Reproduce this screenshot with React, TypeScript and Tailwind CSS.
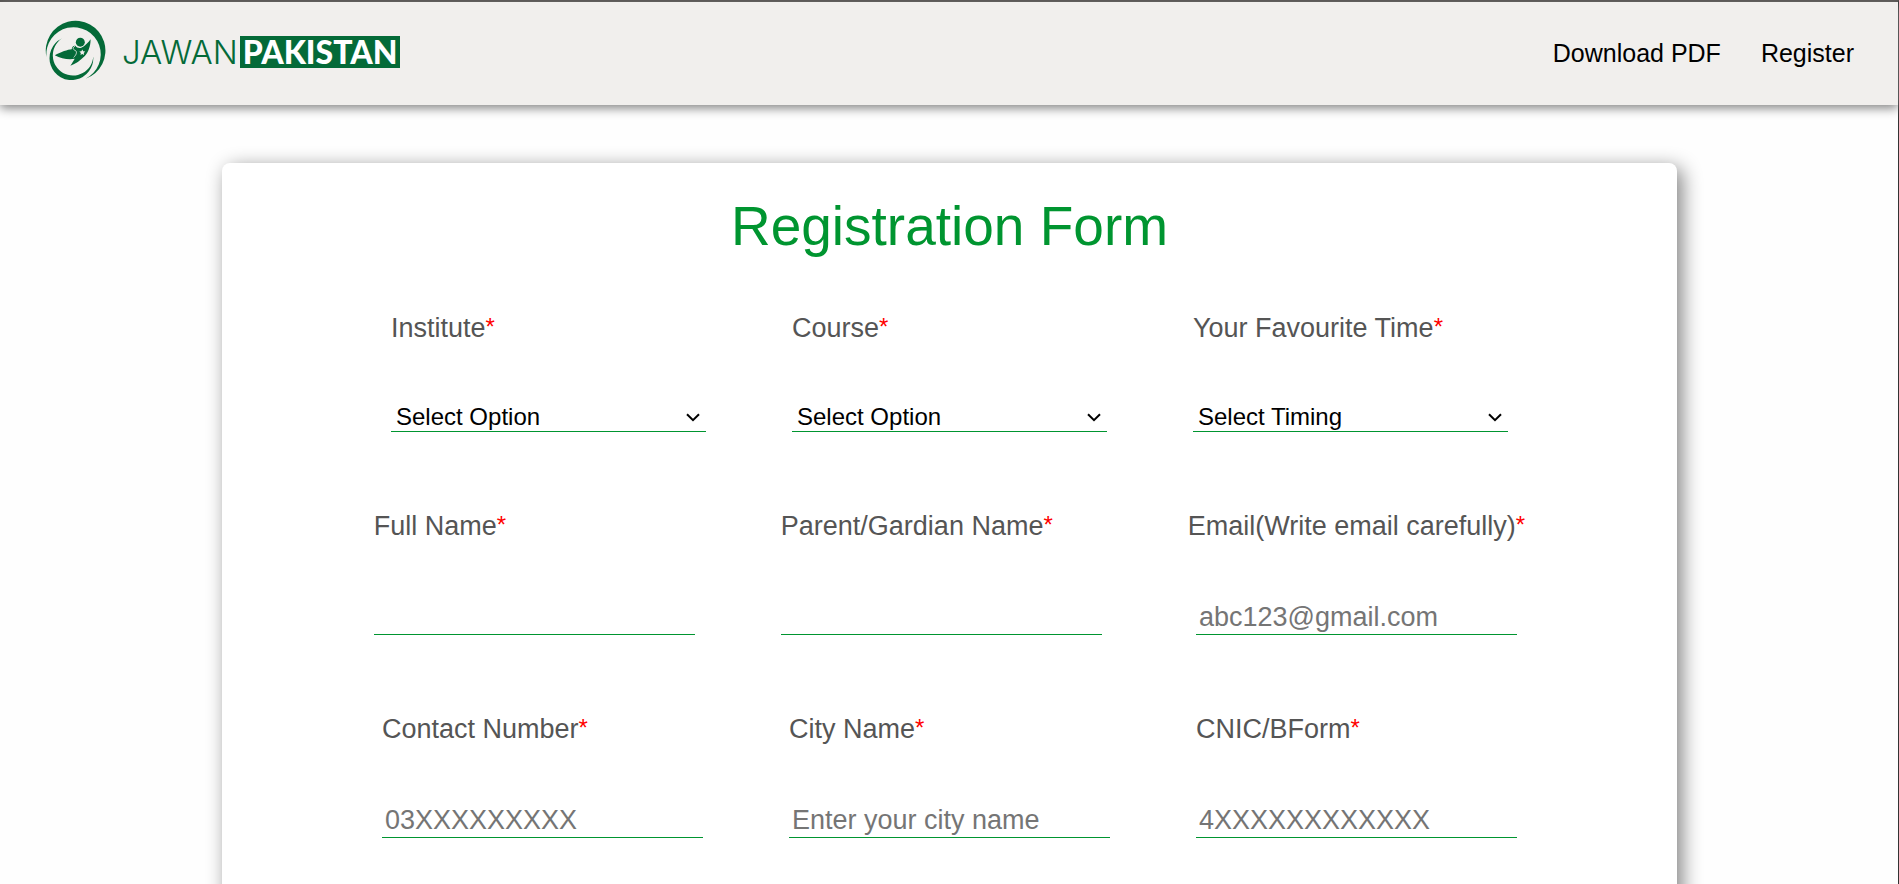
import React from "react";

type FieldBase = { id: string; label: string };
type SelectSpec = FieldBase & { option: string };
type InputSpec = FieldBase & { type: string; placeholder?: string };

const selects: SelectSpec[] = [
  { id: "institute", label: "Institute", option: "Select Option" },
  { id: "course", label: "Course", option: "Select Option" },
  { id: "time", label: "Your Favourite Time", option: "Select Timing" },
];

const people: InputSpec[] = [
  { id: "full-name", label: "Full Name", type: "text" },
  { id: "parent-name", label: "Parent/Gardian Name", type: "text" },
  { id: "email", label: "Email(Write email carefully)", type: "email", placeholder: "abc123@gmail.com" },
];

const contacts: InputSpec[] = [
  { id: "contact", label: "Contact Number", type: "tel", placeholder: "03XXXXXXXXX" },
  { id: "city", label: "City Name", type: "text", placeholder: "Enter your city name" },
  { id: "cnic", label: "CNIC/BForm", type: "text", placeholder: "4XXXXXXXXXXXX" },
];

function Emblem() {
  return (
    <svg viewBox="30 30 183 181" className="h-[60px] w-[61px] shrink-0" fill="#046a38" aria-hidden="true">
      <path d="M34 142 A90 90 0 1 1 152 207 A82 82 0 1 0 34 142Z" />
      <path d="M80 86 A66 66 0 1 0 175 140 A61 61 0 1 1 80 86Z" />
      <circle cx="136" cy="97" r="13.5" />
      <path d="M59 136 C78 126 98 119 110 118 C111 110 116 106 121 108 C125 114 132 116 139 114 C150 108 160 98 167 88 C167 110 160 128 148 140 C136 152 122 162 106 168 C112 160 116 152 119 147 C100 151 78 146 59 136Z" />
      <path d="M120 109 C112 113 113 119 121 122 C128 126 123 136 116 143" fill="none" stroke="#f1efed" strokeWidth="2.5" />
      <path d="M142 119 l2.8 5.6 6 .8 -4.4 4.2 1.1 6 -5.5 -2.9 -5.5 2.9 1.1 -6 -4.4 -4.2 6 -.8Z" fill="#f1efed" />
    </svg>
  );
}

function Field({ id, label, children }: FieldBase & { children: React.ReactNode }) {
  return (
    <div className="flex flex-col items-center gap-[57px]">
      <label htmlFor={id} className="flex w-full items-start text-[27px] leading-[31px] whitespace-nowrap text-[#555555]">
        {label}
        <span className="text-[24px] leading-[27px] text-[#ff0000]">*</span>
      </label>
      {children}
    </div>
  );
}

function InputRow({ fields }: { fields: InputSpec[] }) {
  return (
    <div className="flex flex-wrap justify-center gap-x-[86px] gap-y-[79px]">
      {fields.map((f) => (
        <Field key={f.id} id={f.id} label={f.label}>
          <input
            id={f.id}
            type={f.type}
            placeholder={f.placeholder}
            className="h-9 w-[321px] border-b border-[#009530] bg-transparent px-[3px] pt-[2px] text-[27px] leading-[31px] outline-none placeholder:text-[#757575]"
          />
        </Field>
      ))}
    </div>
  );
}

export default function App() {
  return (
    <div className="min-h-screen border-t-2 border-r border-t-[#555250] border-r-[#333333] bg-[#fefefe] font-['Liberation_Sans',Arial,sans-serif]">
      <header className="flex h-[103px] items-center justify-between bg-[#f1efed] px-11 pb-[2px] shadow-[0_3px_10px_#808080]">
        <a href="#" className="flex items-start gap-4 pb-[6px] pl-px">
          <Emblem />
          <span className="flex items-center gap-[2px] pt-4 leading-8 text-[#046a38]">
            <span className="font-['Inter',sans-serif] text-[33px] font-light">JAWAN</span>
            <span className="bg-[#046a38] px-[3px] font-['Lato',sans-serif] text-[32px] font-black text-white">PAKISTAN</span>
          </span>
        </a>
        <nav className="flex gap-10 text-[25px] leading-7 text-black">
          <a href="#">Download PDF</a>
          <a href="#">Register</a>
        </nav>
      </header>
      <main className="pt-[58px] pr-[221px] pl-[222px]">
        <form className="flex flex-col gap-[79px] rounded-lg bg-white pt-8 pb-20 shadow-[5px_5px_20px_#808080]">
          <div className="flex flex-col gap-[55px]">
            <h1 className="text-center text-[55px] leading-[63px] text-[#009530]">Registration Form</h1>
            <div className="flex flex-wrap justify-center gap-x-[86px] gap-y-[79px]">
              {selects.map((s) => (
                <Field key={s.id} id={s.id} label={s.label}>
                  <div className="relative">
                    <select
                      id={s.id}
                      className="block h-[31px] w-[315px] appearance-none border-b border-[#009530] bg-white pt-px pr-8 pl-[5px] text-[24px] leading-[30px] text-black outline-none"
                    >
                      <option>{s.option}</option>
                    </select>
                    <svg
                      viewBox="0 0 14 9"
                      className="pointer-events-none absolute top-3 right-[6px] h-[9px] w-[14px]"
                      fill="none"
                      stroke="#000"
                      strokeWidth="2"
                      aria-hidden="true"
                    >
                      <path d="M1 1.2 L7 7.2 L13 1.2" />
                    </svg>
                  </div>
                </Field>
              ))}
            </div>
          </div>
          <InputRow fields={people} />
          <InputRow fields={contacts} />
        </form>
      </main>
    </div>
  );
}
